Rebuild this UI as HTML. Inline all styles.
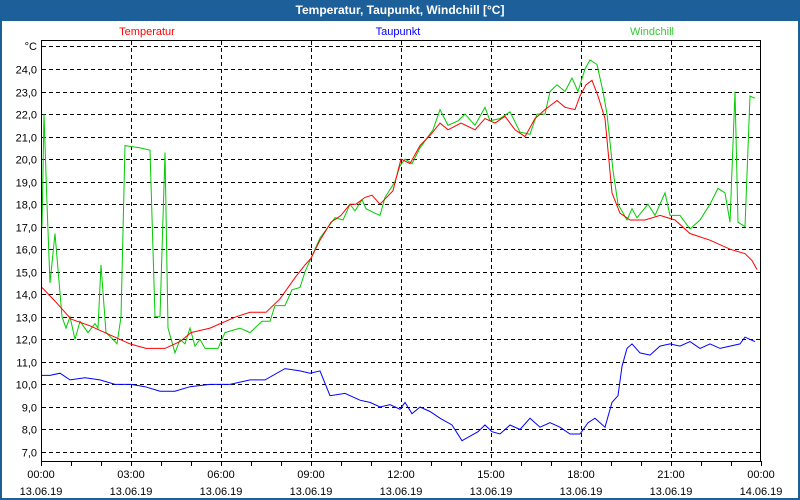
<!DOCTYPE html>
<html><head><meta charset="utf-8"><style>
html,body{margin:0;padding:0;width:800px;height:500px;overflow:hidden;background:#fff;font-family:"Liberation Sans",Tahoma,sans-serif}
#frame{position:absolute;left:0;top:0;width:796px;height:498px;border:2px solid #1d5f98;border-top:none}
#title{position:absolute;left:0;top:0;width:800px;height:21px;background:#1d5f98;color:#fff;font-weight:bold;font-size:12px;text-align:center;line-height:21px}
svg{position:absolute;left:0;top:0}
svg text{font-family:"Liberation Sans",Tahoma,sans-serif;font-size:11px}
</style></head><body>
<div id="frame"></div>
<div id="title">Temperatur, Taupunkt, Windchill [°C]</div>
<svg id="s" width="800" height="500" xmlns="http://www.w3.org/2000/svg">
<text x="147" y="35" fill="#ff0000" text-anchor="middle">Temperatur</text>
<text x="398" y="35" fill="#0000ff" text-anchor="middle">Taupunkt</text>
<text x="652" y="35" fill="#33cc33" text-anchor="middle">Windchill</text>
<g id="grid" stroke="#000" stroke-width="1" stroke-dasharray="4,3" fill="none"></g>
<g id="ylab" fill="#000" text-anchor="end"></g>
<g id="xlab" fill="#000" text-anchor="middle"></g>
<text x="37" y="50" text-anchor="end" fill="#000">°C</text>
<rect x="41.5" y="40.5" width="719" height="421" fill="none" stroke="#000"/>
<g id="ticks" stroke="#000"></g>
<g id="lines" fill="none" stroke-width="1"></g>
</svg>
<script>
var Y=function(v){return 69+(24-v)*22.53};
var ns="http://www.w3.org/2000/svg";
function el(p,t,a,txt){var e=document.createElementNS(ns,t);for(var k in a)e.setAttribute(k,a[k]);if(txt)e.textContent=txt;document.getElementById(p).appendChild(e);}
for(var v=7;v<=25;v++){var y=Math.round(Y(v))+0.5;el("grid","line",{x1:42,x2:760,y1:y,y2:y});if(v<=24)el("ylab","text",{x:37,y:y+4},v+",0");}
for(var i=1;i<8;i++){var x=41+90*i+0.5;el("grid","line",{x1:x,x2:x,y1:41,y2:461});}
for(var h=0;h<=24;h++){var x=41+30*h+0.5;el("ticks","line",{x1:x,x2:x,y1:461,y2:466});}
var times=["00:00","03:00","06:00","09:00","12:00","15:00","18:00","21:00","00:00"];
for(var i=0;i<9;i++){var x=41+90*i;el("xlab","text",{x:x,y:478},times[i]);el("xlab","text",{x:x,y:495},i==8?"14.06.19":"13.06.19");}
var red=[[42,14.3],[55,13.7],[71,12.9],[90,12.6],[110,12.2],[130,11.8],[146,11.6],[165,11.6],[180,11.9],[191,12.3],[210,12.5],[236,13],[250,13.2],[266,13.2],[280,13.8],[296,14.8],[305,15.3],[311,15.6],[320,16.4],[331,17.2],[341,17.5],[350,18],[356,18],[365,18.3],[372,18.4],[380,18],[393,18.6],[401,20],[410,19.8],[420,20.6],[431,21.1],[440,21.6],[448,21.3],[461,21.6],[475,21.3],[485,21.8],[495,21.6],[505,21.9],[515,21.3],[525,21],[535,21.8],[545,22.2],[557,22.6],[565,22.3],[575,22.2],[580,22.8],[586,23.3],[592,23.5],[598,22.8],[605,21.8],[612,18.5],[620,17.6],[630,17.3],[645,17.3],[660,17.5],[675,17.3],[690,16.7],[710,16.4],[730,16],[745,15.8],[752,15.5],[757,15.1]];
var green=[[42,17],[44,22],[47,18],[50,14.5],[55,16.7],[62,13],[66,12.5],[70,13],[75,12],[80,12.8],[88,12.3],[95,12.7],[98,12.5],[101,15.3],[106,12.3],[113,12],[117,11.8],[121,13],[125,20.6],[140,20.5],[150,20.4],[155,13],[160,13],[165,20.3],[168,12.5],[175,11.4],[180,12],[185,11.8],[190,12.5],[195,11.7],[200,12],[205,11.6],[218,11.6],[225,12.3],[240,12.5],[250,12.3],[262,12.8],[270,12.8],[275,13.5],[285,13.5],[292,14.2],[300,14.3],[305,15],[320,16.5],[335,17.4],[343,17.3],[350,18],[355,17.7],[362,18.2],[366,17.8],[375,17.6],[380,17.5],[385,18.3],[395,19],[400,19.7],[405,20],[412,19.8],[420,20.5],[428,21],[433,21.3],[440,22.2],[448,21.5],[458,21.7],[465,22],[475,21.5],[485,22.3],[490,21.7],[500,21.8],[510,22.1],[520,21.2],[530,21.1],[537,22],[545,22],[550,23],[557,23.3],[565,23],[572,23.6],[578,23],[585,24],[590,24.4],[597,24.2],[603,23],[607,22],[613,19.5],[618,18],[627,17.3],[632,17.8],[637,17.4],[648,18],[655,17.5],[665,18.5],[670,17.5],[680,17.5],[690,16.9],[700,17.3],[710,18],[718,18.7],[725,18.5],[730,17.2],[735,23],[738,17.2],[745,17],[750,22.8],[755,22.7]];
var blue=[[42,10.4],[50,10.4],[60,10.5],[70,10.2],[85,10.3],[100,10.2],[115,10],[131,10],[145,9.9],[160,9.7],[175,9.7],[190,9.9],[210,10],[230,10],[250,10.2],[265,10.2],[285,10.7],[300,10.6],[310,10.5],[320,10.6],[330,9.5],[345,9.6],[360,9.3],[370,9.2],[380,9],[390,9.1],[400,8.9],[405,9.2],[412,8.7],[420,9],[430,8.8],[440,8.5],[452,8.2],[462,7.5],[470,7.7],[478,7.9],[485,8.2],[492,7.9],[500,7.8],[510,8.2],[520,8],[530,8.5],[540,8.1],[550,8.3],[560,8.1],[570,7.8],[580,7.8],[588,8.3],[595,8.5],[605,8.1],[612,9.2],[618,9.5],[622,10.8],[627,11.6],[632,11.8],[640,11.4],[650,11.3],[660,11.7],[670,11.8],[680,11.7],[690,11.9],[700,11.6],[710,11.8],[720,11.6],[730,11.7],[740,11.8],[745,12.1],[750,12],[755,11.9]];
function pl(d,c){el("lines","polyline",{points:d.map(function(p){return p[0]+","+Y(p[1]).toFixed(1)}).join(" "),stroke:c});}
pl(green,"#00cc00");pl(red,"#ff0000");pl(blue,"#0000ff");
</script>
</body></html>
